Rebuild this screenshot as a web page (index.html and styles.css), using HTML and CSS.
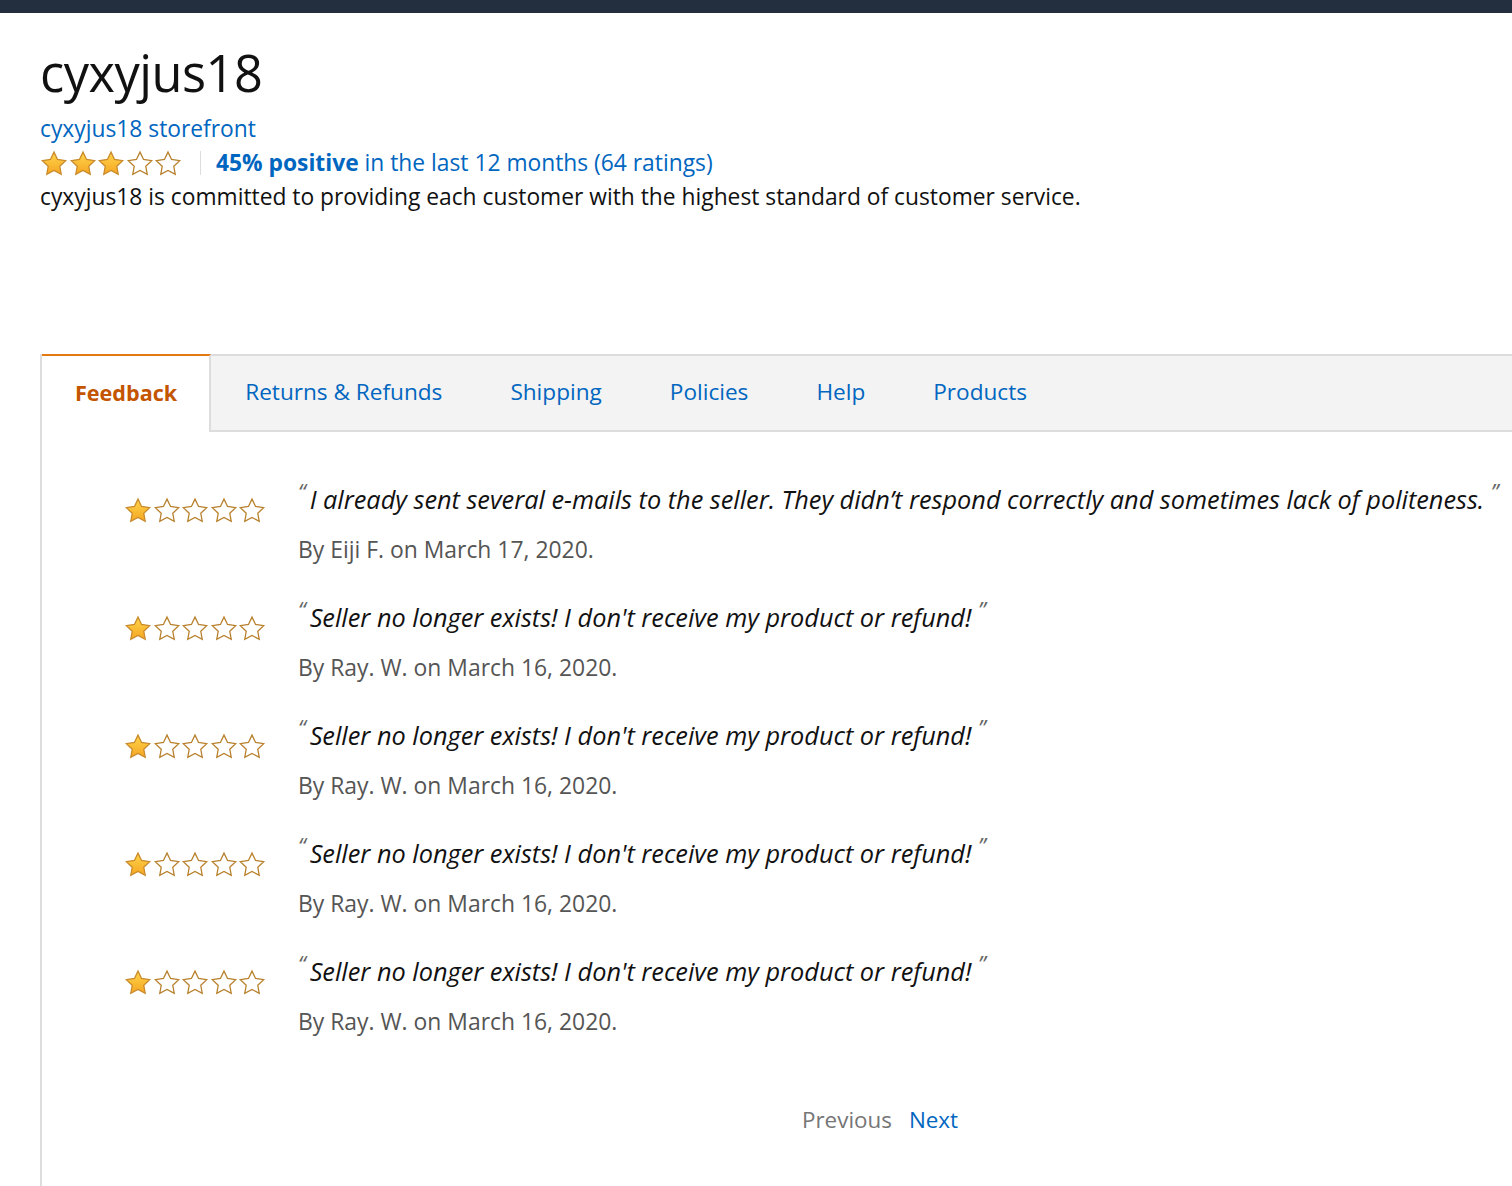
FILE: index.html
```html
<!DOCTYPE html>
<html lang="en">
<head>
<meta charset="utf-8">
<title>cyxyjus18</title>
<link rel="stylesheet" href="styles.css">
</head>
<body>
<svg class="defs" width="0" height="0" aria-hidden="true">
  <defs>
    <linearGradient id="gold" x1="0" y1="0" x2="0" y2="1">
      <stop offset="0" stop-color="#ffd54a"/>
      <stop offset="1" stop-color="#f5a623"/>
    </linearGradient>
    <symbol id="star" viewBox="0 0 24 24">
      <path d="M12 1.8l3.05 6.35 6.95.95-5.05 4.85 1.25 6.9L12 17.55 5.8 20.85l1.25-6.9L2 9.1l6.95-.95z"/>
    </symbol>
  </defs>
</svg>
<div class="topbar"></div>
<header class="seller">
  <h1 class="seller-name">cyxyjus18</h1>
  <a class="storefront" href="#">cyxyjus18 storefront</a>
  <div class="rating-line">
    <span class="stars big">
      <svg class="star on"><use href="#star"/></svg><svg class="star on"><use href="#star"/></svg><svg class="star on"><use href="#star"/></svg><svg class="star off"><use href="#star"/></svg><svg class="star off"><use href="#star"/></svg>
    </span>
    <span class="sep"></span>
    <a class="rating-link" href="#"><b>45% positive</b> in the last 12 months (64 ratings)</a>
  </div>
  <p class="about">cyxyjus18 is committed to providing each customer with the highest standard of customer service.</p>
</header>

<section class="panel">
  <nav class="tabs">
    <a class="tab active" href="#">Feedback</a>
    <a class="tab" href="#">Returns &amp; Refunds</a>
    <a class="tab" href="#">Shipping</a>
    <a class="tab" href="#">Policies</a>
    <a class="tab" href="#">Help</a>
    <a class="tab" href="#">Products</a>
    <span class="tab-fill"></span>
  </nav>

  <div class="reviews">
    <div class="review">
      <span class="stars">
        <svg class="star on"><use href="#star"/></svg><svg class="star off"><use href="#star"/></svg><svg class="star off"><use href="#star"/></svg><svg class="star off"><use href="#star"/></svg><svg class="star off"><use href="#star"/></svg>
      </span>
      <div class="review-body">
        <p class="quote"><span class="q open">“</span>I already sent several e-mails to the seller. They didn’t respond correctly and sometimes lack of politeness. <span class="q">”</span></p>
        <p class="by">By Eiji F. on March 17, 2020.</p>
      </div>
    </div>
    <div class="review">
      <span class="stars">
        <svg class="star on"><use href="#star"/></svg><svg class="star off"><use href="#star"/></svg><svg class="star off"><use href="#star"/></svg><svg class="star off"><use href="#star"/></svg><svg class="star off"><use href="#star"/></svg>
      </span>
      <div class="review-body">
        <p class="quote"><span class="q open">“</span>Seller no longer exists! I don't receive my product or refund! <span class="q">”</span></p>
        <p class="by">By Ray. W. on March 16, 2020.</p>
      </div>
    </div>
    <div class="review">
      <span class="stars">
        <svg class="star on"><use href="#star"/></svg><svg class="star off"><use href="#star"/></svg><svg class="star off"><use href="#star"/></svg><svg class="star off"><use href="#star"/></svg><svg class="star off"><use href="#star"/></svg>
      </span>
      <div class="review-body">
        <p class="quote"><span class="q open">“</span>Seller no longer exists! I don't receive my product or refund! <span class="q">”</span></p>
        <p class="by">By Ray. W. on March 16, 2020.</p>
      </div>
    </div>
    <div class="review">
      <span class="stars">
        <svg class="star on"><use href="#star"/></svg><svg class="star off"><use href="#star"/></svg><svg class="star off"><use href="#star"/></svg><svg class="star off"><use href="#star"/></svg><svg class="star off"><use href="#star"/></svg>
      </span>
      <div class="review-body">
        <p class="quote"><span class="q open">“</span>Seller no longer exists! I don't receive my product or refund! <span class="q">”</span></p>
        <p class="by">By Ray. W. on March 16, 2020.</p>
      </div>
    </div>
    <div class="review">
      <span class="stars">
        <svg class="star on"><use href="#star"/></svg><svg class="star off"><use href="#star"/></svg><svg class="star off"><use href="#star"/></svg><svg class="star off"><use href="#star"/></svg><svg class="star off"><use href="#star"/></svg>
      </span>
      <div class="review-body">
        <p class="quote"><span class="q open">“</span>Seller no longer exists! I don't receive my product or refund! <span class="q">”</span></p>
        <p class="by">By Ray. W. on March 16, 2020.</p>
      </div>
    </div>
  </div>

  <div class="pager">
    <span class="prev">Previous</span>
    <a class="next" href="#">Next</a>
  </div>
</section>
</body>
</html>
```

FILE: styles.css
```css
* { box-sizing: border-box; }
html, body { margin: 0; padding: 0; background: #fff; }
body {
  font-family: "Open Sans", "Noto Sans", "Liberation Sans", sans-serif;
  color: #111;
  overflow: hidden;
  height: 1186px;
}
a { text-decoration: none; color: #0066c0; }
p { margin: 0; }
.defs { position: absolute; width: 0; height: 0; }

.topbar { height: 13px; background: #232f3e; }

.seller { padding: 30px 0 0 40px; }
.seller-name {
  margin: 0;
  font-size: 50.5px;
  line-height: 60px;
  font-weight: 400;
  color: #111;
  letter-spacing: -0.5px;
}
.storefront {
  display: block;
  margin-top: 9px;
  font-size: 22.8px;
  line-height: 34px;
}
.rating-line {
  display: flex;
  align-items: center;
  height: 34px;
}
.stars { display: flex; gap: 0.5px; }
.star { width: 28px; height: 28px; }
.star.on { fill: url(#gold); stroke: #c98a2b; stroke-width: 1.1; }
.star.off { fill: #fff; stroke: #b8802c; stroke-width: 1.1; }
.big { margin-top: 2px; }
.sep { width: 1px; height: 24px; background: #ddd; margin: 0 15px 0 18px; }
.rating-link { font-size: 22.8px; line-height: 34px; }
.rating-link b { font-weight: 700; }
.about { font-size: 22.8px; line-height: 34px; }

.panel {
  margin: 140px 0 0 40px;
  border-left: 2px solid #ddd;
  height: 832px;
}
.tabs {
  display: flex;
  height: 78px;
}
.tab {
  display: flex;
  align-items: center;
  padding: 0 34px 3px;
  font-size: 22.6px;
  background: #f3f3f3;
  border-top: 2px solid #ddd;
  border-bottom: 2px solid #ddd;
  color: #0066c0;
}
.tab.active {
  padding: 0 32px 3px 33px;
  background: #fff;
  border-top: 2px solid #e47911;
  border-bottom: 0;
  border-right: 2px solid #ddd;
  color: #c45500;
  font-weight: 700;
  font-size: 21.6px;
}
.tab-fill {
  flex: 1;
  background: #f3f3f3;
  border-top: 2px solid #ddd;
  border-bottom: 2px solid #ddd;
}

.reviews { padding: 49px 0 0 82px; }
.review {
  display: flex;
  margin-bottom: 31px;
}
.review .stars { width: 174px; padding-top: 16px; align-self: flex-start; }
.quote {
  font-style: italic;
  font-size: 25.3px;
  line-height: 36px;
  height: 36px;
  color: #111;
  white-space: nowrap;
}
.q {
  font-size: 22px;
  line-height: 0;
  vertical-align: 9px;
  color: #666;
}
.q.open { margin-right: 4px; }
.by {
  margin-top: 15px;
  font-size: 22.9px;
  line-height: 36px;
  color: #555;
}

.pager {
  display: flex;
  gap: 17px;
  padding: 31px 0 0 760px;
  font-size: 22.4px;
  line-height: 36px;
}
.prev { color: #767676; }
.next { color: #0066c0; }
```
